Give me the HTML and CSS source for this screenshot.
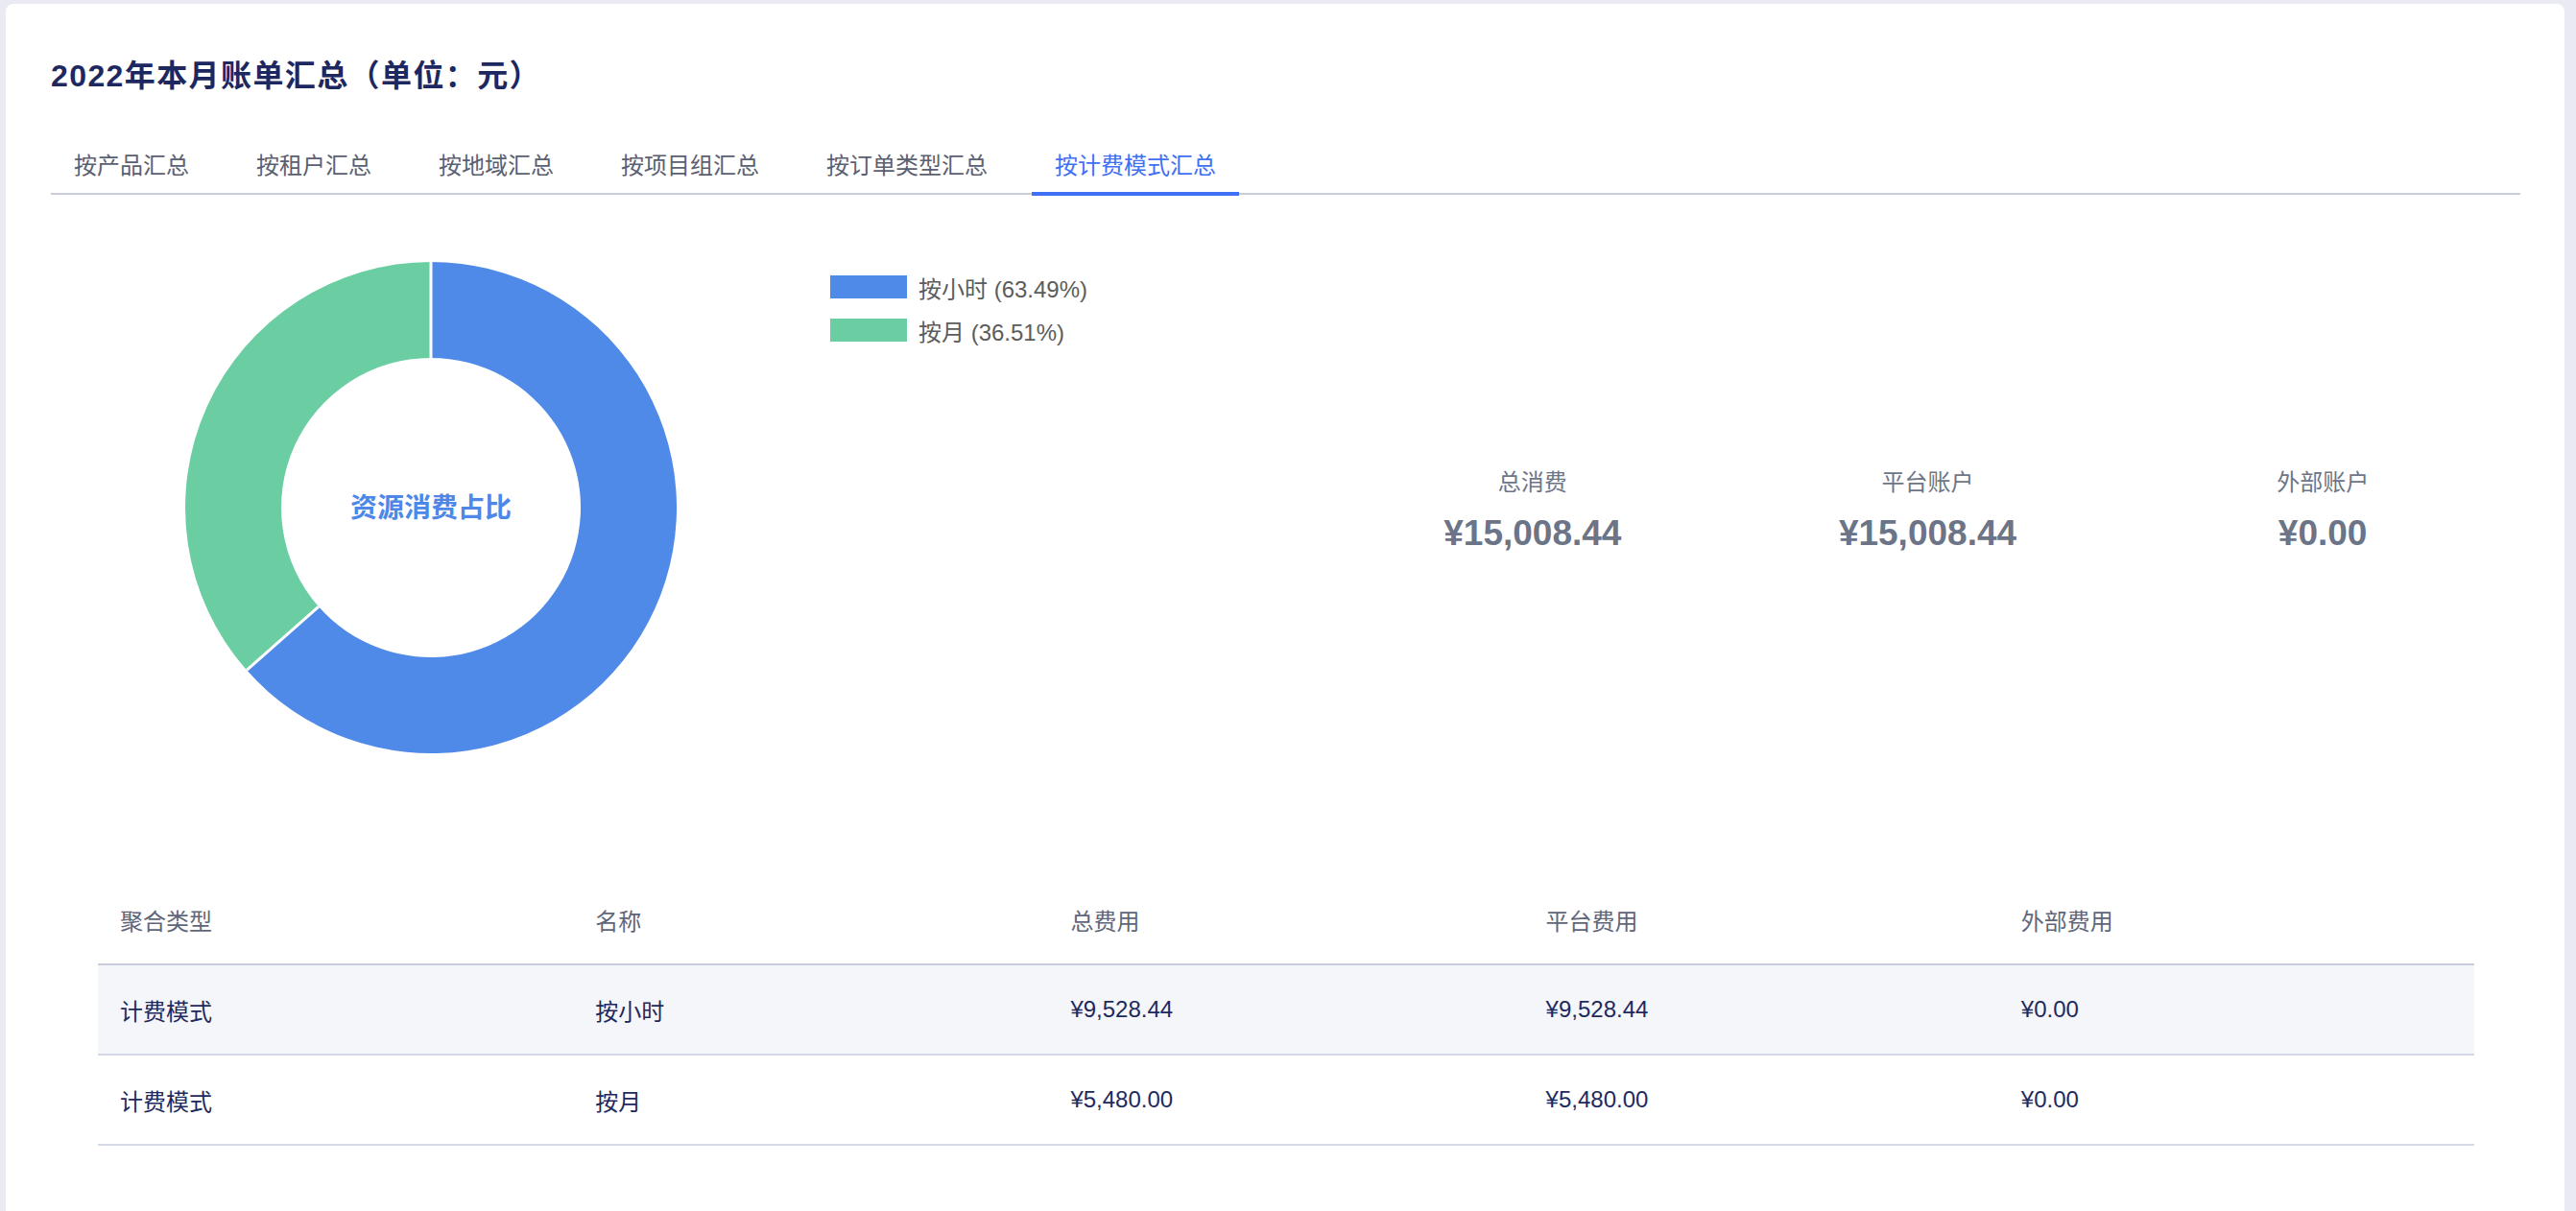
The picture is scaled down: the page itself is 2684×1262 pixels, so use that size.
FILE: index.html
```html
<!DOCTYPE html>
<html lang="zh-CN">
<head>
<meta charset="utf-8">
<title>2022年本月账单汇总</title>
<link rel="stylesheet" href="styles.css">
</head>
<body>
<div class="card">
  <h1 class="title">2022年本月账单汇总（单位：元）</h1>
  <nav class="tabs">
    <div class="tab">按产品汇总</div>
    <div class="tab">按租户汇总</div>
    <div class="tab">按地域汇总</div>
    <div class="tab">按项目组汇总</div>
    <div class="tab">按订单类型汇总</div>
    <div class="tab active">按计费模式汇总</div>
  </nav>
  <section class="overview">
    <div class="chart-area">
      <svg class="donut" viewBox="0 0 512 512" width="512" height="512">
        <path class="seg-blue" d="M256 0 A256 256 0 1 1 64.05 425.37 L139.03 359.21 A156 156 0 1 0 256 100 Z"/>
        <path class="seg-green" d="M64.05 425.37 A256 256 0 0 1 256 0 L256 100 A156 156 0 0 0 139.03 359.21 Z"/>
        <line class="seg-gap" x1="256" y1="0" x2="256" y2="100"/>
        <line class="seg-gap" x1="64.05" y1="425.37" x2="139.03" y2="359.21"/>
        <text class="donut-label" x="256" y="256" text-anchor="middle" dominant-baseline="central">资源消费占比</text>
      </svg>
      <ul class="legend">
        <li class="legend-item"><span class="swatch blue"></span>按小时 (63.49%)</li>
        <li class="legend-item"><span class="swatch green"></span>按月 (36.51%)</li>
      </ul>
    </div>
    <div class="stats">
      <div class="stat"><div class="stat-label">总消费</div><div class="stat-value">¥15,008.44</div></div>
      <div class="stat"><div class="stat-label">平台账户</div><div class="stat-value">¥15,008.44</div></div>
      <div class="stat"><div class="stat-label">外部账户</div><div class="stat-value">¥0.00</div></div>
    </div>
  </section>
  <div class="table">
    <div class="row head">
      <div class="cell">聚合类型</div>
      <div class="cell">名称</div>
      <div class="cell">总费用</div>
      <div class="cell">平台费用</div>
      <div class="cell">外部费用</div>
    </div>
    <div class="row alt">
      <div class="cell">计费模式</div>
      <div class="cell">按小时</div>
      <div class="cell">¥9,528.44</div>
      <div class="cell">¥9,528.44</div>
      <div class="cell">¥0.00</div>
    </div>
    <div class="row">
      <div class="cell">计费模式</div>
      <div class="cell">按月</div>
      <div class="cell">¥5,480.00</div>
      <div class="cell">¥5,480.00</div>
      <div class="cell">¥0.00</div>
    </div>
  </div>
</div>
</body>
</html>
```

FILE: styles.css
```css
* { box-sizing: border-box; }
html, body { margin: 0; }
body {
  background: #e9eaf2;
  font-family: "Liberation Sans", "Noto Sans CJK SC", sans-serif;
  overflow: hidden;
}
.card {
  margin: 4px 12px 0 6px;
  background: #fff;
  border-radius: 8px 8px 0 0;
  padding: 53px 46px 0 47px;
  min-height: 1258px;
}
.title {
  margin: 0;
  font-size: 32px;
  line-height: 44px;
  font-weight: 700;
  letter-spacing: 1.4px;
  color: #1d2760;
}
.tabs {
  display: flex;
  gap: 22px;
  margin-top: 52px;
  border-bottom: 2px solid #c8cdd9;
}
.tab {
  position: relative;
  padding: 0 24px 8px;
  font-size: 24px;
  line-height: 40px;
  color: #5a6072;
}
.tab.active { color: #3f6ff5; }
.tab.active::after {
  content: "";
  position: absolute;
  left: 0;
  right: 0;
  bottom: -3px;
  height: 4px;
  background: #3f6ff5;
}
.overview {
  display: grid;
  grid-template-columns: 1338px 1fr;
  align-items: center;
  height: 652px;
}
.chart-area {
  display: flex;
  align-items: flex-start;
  padding-left: 140px;
}
.donut { width: 512px; height: 512px; flex: none; display: block; }
.seg-blue { fill: #4f8ae9; }
.seg-green { fill: #6bcea3; }
.seg-gap { stroke: #fff; stroke-width: 3; }
.donut-label {
  font-family: "Liberation Sans", "Noto Sans CJK SC", sans-serif;
  font-size: 28px;
  font-weight: 700;
  fill: #4d87e8;
}
.legend {
  list-style: none;
  margin: 14px 0 0 160px;
  padding: 0;
  display: flex;
  flex-direction: column;
  gap: 21px;
}
.legend-item {
  display: flex;
  align-items: center;
  gap: 12px;
  height: 24px;
  font-size: 24px;
  color: #5c5c5c;
  white-space: nowrap;
}
.swatch { width: 80px; height: 24px; flex: none; }
.swatch.blue { background: #4f8ae9; }
.swatch.green { background: #6bcea3; }
.stats {
  display: grid;
  grid-template-columns: repeat(3, 1fr);
  padding-top: 6px;
}
.stat { text-align: center; }
.stat-label {
  font-size: 24px;
  line-height: 34px;
  color: #6d7587;
}
.stat-value {
  margin-top: 14px;
  font-size: 37px;
  line-height: 44px;
  font-weight: 700;
  color: #6c7487;
}
.table { margin: 57px 48px 0 49px; }
.row {
  display: grid;
  grid-template-columns: repeat(5, 1fr);
  align-items: center;
  height: 94px;
  border-bottom: 2px solid #d5d8e7;
  font-size: 24px;
  color: #1e2a5e;
}
.row.head { color: #5f6679; border-bottom-color: #c8ccdb; }
.row.alt { background: #f5f6fa; }
.cell { padding: 0 23px; }
```
